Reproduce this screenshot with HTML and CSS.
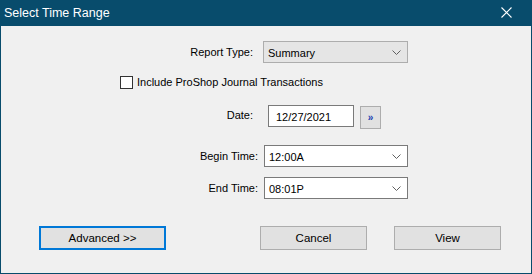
FILE: index.html
```html
<!DOCTYPE html>
<html lang="en">
<head>
  <meta charset="UTF-8">
  <title>Select Time Range</title>
  <link rel="stylesheet" href="styles.css">
</head>
<body>
  <div class="window">
    <div class="titlebar">
      <span class="title">Select Time Range</span>
      <svg class="close" width="11" height="11" viewBox="0 0 11 11">
        <path d="M0.5 0.5 L10.5 10.5 M10.5 0.5 L0.5 10.5" stroke="#fff" stroke-width="1.1" fill="none"/>
      </svg>
    </div>

    <div class="content">
      <div class="row">
        <div class="label lbl-type">Report Type:</div>
        <div class="combo combo-list">
          <span>Summary</span>
          <svg class="chev" width="9" height="5" viewBox="0 0 9 5"><path d="M0.5 0.5 L4.5 4.5 L8.5 0.5" stroke="#606060" fill="none"/></svg>
        </div>
      </div>

      <div class="row row-check">
        <span class="checkbox"></span>
        <span>Include ProShop Journal Transactions</span>
      </div>

      <div class="row row-date">
        <div class="label lbl-date">Date:</div>
        <div class="textbox">12/27/2021</div>
        <div class="small-btn">&raquo;</div>
      </div>

      <div class="row row-begin">
        <div class="label lbl-time">Begin Time:</div>
        <div class="combo combo-edit">
          <span>12:00A</span>
          <svg class="chev" width="9" height="5" viewBox="0 0 9 5"><path d="M0.5 0.5 L4.5 4.5 L8.5 0.5" stroke="#606060" fill="none"/></svg>
        </div>
      </div>

      <div class="row row-end">
        <div class="label lbl-time">End Time:</div>
        <div class="combo combo-edit">
          <span>08:01P</span>
          <svg class="chev" width="9" height="5" viewBox="0 0 9 5"><path d="M0.5 0.5 L4.5 4.5 L8.5 0.5" stroke="#606060" fill="none"/></svg>
        </div>
      </div>

      <div class="buttons">
        <div class="btn btn-default">Advanced &gt;&gt;</div>
        <div class="btn btn-cancel">Cancel</div>
        <div class="btn btn-view">View</div>
      </div>
    </div>
  </div>
</body>
</html>
```

FILE: styles.css
```css
:root {
  --frame: #084c6c;
  --face: #f0f0f0;
  --btn: #e1e1e1;
  --btn-border: #adadad;
  --field-border: #7a7a7a;
}
html, body {
  margin: 0;
  padding: 0;
  background: var(--face);
  font-family: 'Liberation Sans', Arial, sans-serif;
  font-size: 11px;
  color: #000;
}
.window {
  width: 532px;
  height: 274px;
  box-sizing: border-box;
  border: 1px solid var(--frame);
  border-top: none;
  background: var(--face);
}
.titlebar {
  height: 26px;
  margin: 0 -1px;
  background: var(--frame);
  color: #fff;
  display: flex;
  align-items: center;
  justify-content: space-between;
  padding: 0 20px 1px 4px;
  box-sizing: border-box;
}
.title {
  font-size: 12.5px;
}

.content {
  padding-top: 15px;
}
.row {
  display: flex;
  align-items: center;
  height: 22px;
}
.label {
  text-align: right;
  box-sizing: border-box;
}
.lbl-type { width: 252px; margin-right: 10px; }
.lbl-date { width: 252px; margin-right: 15px; }
.lbl-time { width: 257px; margin-right: 6px; }

/* checkbox row */
.row-check {
  height: 14px;
  margin-top: 12px;
  padding-left: 119px;
}
.checkbox {
  width: 11px;
  height: 11px;
  border: 1px solid #333;
  background: #fff;
  margin-right: 4px;
}

.row-date { margin-top: 16px; align-items: flex-start; }
.row-date .label { line-height: 22px; margin-top: -1px; }
.row-begin { margin-top: 18px; }
.row-end { margin-top: 10px; }

.combo, .textbox {
  height: 22px;
  box-sizing: border-box;
  display: flex;
  align-items: center;
  justify-content: space-between;
  padding: 1px 6px 0 4px;
}
.combo-list {
  width: 145px;
  background: #e5e5e5;
  border: 1px solid var(--btn-border);
}
.combo-edit {
  width: 144px;
  background: #fff;
  border: 1px solid var(--field-border);
}
.textbox {
  width: 86px;
  background: #fff;
  border: 1px solid var(--field-border);
  padding-left: 7px;
}
.small-btn {
  width: 21px;
  height: 23px;
  margin: 1px 0 0 6px;
  box-sizing: border-box;
  background: var(--btn);
  border: 1px solid var(--btn-border);
  color: #1a3fb0;
  font-size: 10px;
  font-weight: bold;
  display: flex;
  align-items: center;
  justify-content: center;
}

/* bottom buttons */
.buttons {
  display: flex;
  margin-top: 27px;
  padding-left: 38px;
}
.btn {
  height: 24px;
  width: 107px;
  box-sizing: border-box;
  background: var(--btn);
  border: 1px solid var(--btn-border);
  display: flex;
  align-items: center;
  justify-content: center;
  font-size: 11.5px;
}
.btn-default {
  width: 127px;
  border: 2px solid #0078d7;
}
.btn-cancel { margin-left: 94px; }
.btn-view { margin-left: 27px; }
```
